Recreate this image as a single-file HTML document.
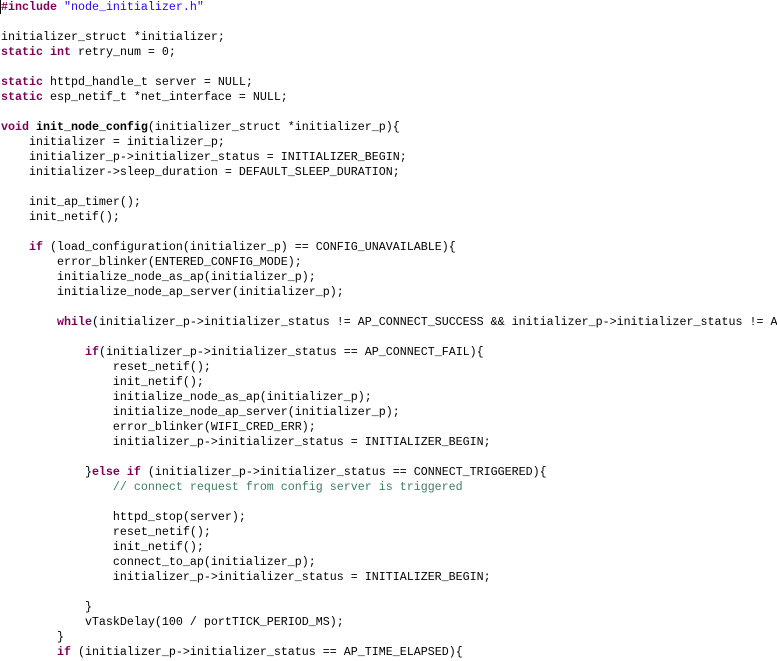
<!DOCTYPE html>
<html><head><meta charset="utf-8"><style>
html,body{margin:0;padding:0;background:#fff;width:777px;height:661px;overflow:hidden}
pre{margin:0;padding:0 0 0 1px;width:776px;height:661px;overflow:hidden;font-family:"Liberation Mono",monospace;font-size:11.67px;line-height:15px;color:#000;white-space:pre;position:relative}
.hl{position:absolute;left:0;top:0;width:777px;height:15px;background:#e8f2fe;z-index:-1}
.k{color:#7f0055;font-weight:bold}
.s{color:#2a00ff}
.c{color:#3f7f5f}
.b{font-weight:bold}
.cur{border-left:1px solid #000;margin-left:-1px}
</style></head><body><pre><div class="hl"></div><span class="k"><span class="cur"></span>#include</span> <span class="s">"node_initializer.h"</span>

initializer_struct *initializer;
<span class="k">static</span> <span class="k">int</span> retry_num = 0;

<span class="k">static</span> httpd_handle_t server = NULL;
<span class="k">static</span> esp_netif_t *net_interface = NULL;

<span class="k">void</span> <span class="b">init_node_config</span>(initializer_struct *initializer_p){
    initializer = initializer_p;
    initializer_p->initializer_status = INITIALIZER_BEGIN;
    initializer->sleep_duration = DEFAULT_SLEEP_DURATION;

    init_ap_timer();
    init_netif();

    <span class="k">if</span> (load_configuration(initializer_p) == CONFIG_UNAVAILABLE){
        error_blinker(ENTERED_CONFIG_MODE);
        initialize_node_as_ap(initializer_p);
        initialize_node_ap_server(initializer_p);

        <span class="k">while</span>(initializer_p->initializer_status != AP_CONNECT_SUCCESS &amp;&amp; initializer_p->initializer_status != A

            <span class="k">if</span>(initializer_p->initializer_status == AP_CONNECT_FAIL){
                reset_netif();
                init_netif();
                initialize_node_as_ap(initializer_p);
                initialize_node_ap_server(initializer_p);
                error_blinker(WIFI_CRED_ERR);
                initializer_p->initializer_status = INITIALIZER_BEGIN;

            }<span class="k">else</span> <span class="k">if</span> (initializer_p->initializer_status == CONNECT_TRIGGERED){
                <span class="c">// connect request from config server is triggered</span>

                httpd_stop(server);
                reset_netif();
                init_netif();
                connect_to_ap(initializer_p);
                initializer_p->initializer_status = INITIALIZER_BEGIN;

            }
            vTaskDelay(100 / portTICK_PERIOD_MS);
        }
        <span class="k">if</span> (initializer_p->initializer_status == AP_TIME_ELAPSED){
</pre></body></html>
